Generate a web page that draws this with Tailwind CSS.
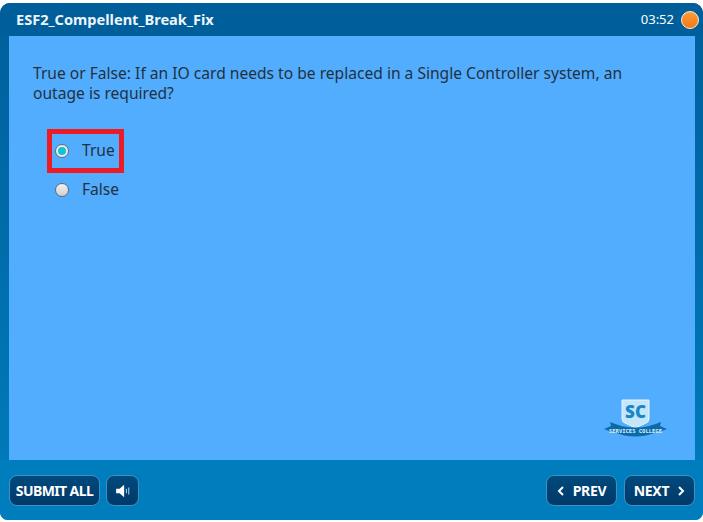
<!DOCTYPE html>
<html lang="en">
<head>
    <meta charset="UTF-8">
    <title>ESF2_Compellent_Break_Fix</title>
    <script src="https://cdn.jsdelivr.net/npm/@tailwindcss/browser@4"></script>
</head>
<body class="bg-white h-[522px] w-[703px] overflow-hidden font-['Noto_Sans',sans-serif]">
    <div class="mt-[3px] h-[517px] flex flex-col rounded-tl-[10px] rounded-tr-[10px] rounded-bl-[8px] rounded-br-[8px] overflow-hidden bg-gradient-to-b from-[#005f9b] to-[#007dbd]">
        <!-- Header -->
        <div class="h-[33px] shrink-0 flex items-center justify-between pl-[16px] pr-[4px] bg-[#005f9b]">
            <h1 class="text-[14.6px] font-bold text-[#eef5fa]">ESF2_Compellent_Break_Fix</h1>
            <div class="flex items-center gap-[7px]">
                <span class="text-[13px] text-white">03:52</span>
                <span class="w-[18px] h-[18px] rounded-full border border-[#fdeedd] bg-gradient-to-b from-[#fb9a3a] to-[#f57a10]"></span>
            </div>
        </div>

        <!-- Question area -->
        <div class="h-[424px] shrink-0 ml-[9px] mr-[8px] bg-[#52adfe] flex flex-col pl-[24px] pr-[24px] pt-[27px] relative">
            <p class="text-[15.6px] leading-[20px] text-[#22313f] max-w-[630px]">True or False: If an IO card needs to be replaced in a Single Controller system, an outage is required?</p>
            <div class="mt-[35px] flex flex-col gap-[14px] pl-[15px]">
                <div class="relative flex items-center h-[25px] gap-[13px] ml-[7px]">
                    <span class="w-[14px] h-[14px] rounded-full border border-[#5c6b78] bg-[#e8edf0] flex items-center justify-center">
                        <span class="w-[8px] h-[8px] rounded-full bg-[#10c4d8]"></span>
                    </span>
                    <span class="text-[15.6px] text-[#22313f]">True</span>
                    <!-- red highlight box -->
                    <div class="absolute left-[-8px] top-[-9px] w-[77px] h-[44px] border-[5px] border-[#ed1c24]"></div>
                </div>
                <div class="flex items-center h-[25px] gap-[13px] ml-[7px]">
                    <span class="w-[14px] h-[14px] rounded-full border border-[#5c6b78] bg-gradient-to-b from-[#f2f2f2] to-[#cfcfcf]"></span>
                    <span class="text-[15.6px] text-[#22313f]">False</span>
                </div>
            </div>

            <!-- Logo -->
            <div class="absolute right-[26px] bottom-[19px] w-[68px] h-[42px]">
                <svg width="68" height="42" viewBox="0 0 68 42">
                    <path d="M21 1 H48 V20 Q48 23 45 24 L34.500 29 L24 24 Q21 23 21 20 Z" fill="#c5e6f8" stroke="#e6f5fd" stroke-width="1"/>
                    <text x="34.500" y="19" text-anchor="middle" font-family="Noto Sans" font-weight="900" font-size="17" fill="#1a86c8">SC</text>
                    <path d="M3 30 L10 27 L9 23 Q34 34 60 23 L59 27 L66 30 L58 33 L56 33 Q34 42 13 33 L11 33 Z" fill="#0d6aa8"/>
                    <text x="34.500" y="34" text-anchor="middle" font-family="DejaVu Sans Mono" font-weight="700" font-size="5.500" fill="#d9f0fb">SERVICES COLLEGE</text>
                </svg>
            </div>
        </div>

        <!-- Footer -->
        <div class="flex-1 bg-[#007dbd] flex items-center justify-between pl-[9px] pr-[8px] pt-[1px]">
            <div class="flex items-center gap-[6px]">
                <button class="h-[31px] w-[91px] rounded-[8px] border border-[#3f8fc4] bg-gradient-to-b from-[#004a7c] to-[#00396a] text-[14px] tracking-[-0.6px] font-bold text-white flex items-center justify-center">SUBMIT ALL</button>
                <button class="h-[31px] w-[33px] rounded-[8px] border border-[#3f8fc4] bg-gradient-to-b from-[#004a7c] to-[#00396a] flex items-center justify-center">
                    <svg width="16" height="16" viewBox="0 0 14 14"><path d="M1 5 H4 L8 1.500 V12.500 L4 9 H1 Z" fill="#fff"/><path d="M10 5 V9 M12 4 V10" stroke="#9cc3dc" stroke-width="1"/></svg>
                </button>
            </div>
            <div class="flex items-center gap-[7px]">
                <button class="h-[31px] w-[71px] rounded-[8px] border border-[#3f8fc4] bg-gradient-to-b from-[#004a7c] to-[#00396a] text-[14px] tracking-[-0.3px] font-bold text-white flex items-center justify-center gap-[8px]">
                    <svg width="8" height="10" viewBox="0 0 8 10"><path d="M6 1 L2 5 L6 9" fill="none" stroke="#fff" stroke-width="2"/></svg>
                    PREV
                </button>
                <button class="h-[31px] w-[71px] rounded-[8px] border border-[#3f8fc4] bg-gradient-to-b from-[#004a7c] to-[#00396a] text-[14px] tracking-[-0.3px] font-bold text-white flex items-center justify-center gap-[8px]">
                    NEXT
                    <svg width="8" height="10" viewBox="0 0 8 10"><path d="M2 1 L6 5 L2 9" fill="none" stroke="#fff" stroke-width="2"/></svg>
                </button>
            </div>
        </div>
    </div>
</body>
</html>
